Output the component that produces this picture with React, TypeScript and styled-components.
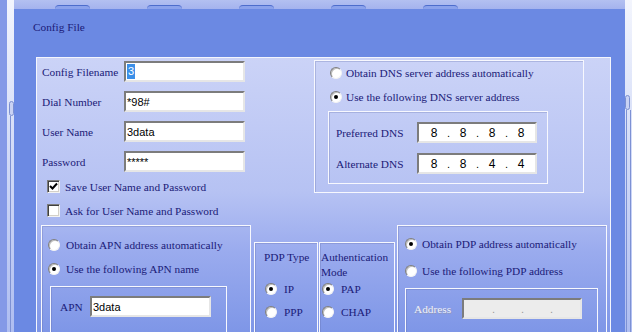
import React from "react";
import styled, { createGlobalStyle } from "styled-components";

const Global = createGlobalStyle`
  html, body { margin: 0; padding: 0; background: #dfe5fa; }
  body { font-family: "Liberation Serif", "Times New Roman", serif; }
  #root { width: 632px; height: 332px; overflow: hidden; }
`;

const NAVY = "#1b1b78";
const FS = "11.3px";

const Screen = styled.div`
  width: 632px;
  height: 332px;
  overflow: hidden;
  display: flex;
  background: linear-gradient(to bottom, #f3f5fd 0%, #d6def8 40%, #aebdf1 100%);
`;

const LeftStrip = styled.div`
  width: 7px;
  flex: none;
  background: #8499e7;
`;

const SideGap = styled.div<{ $bumpTop: number; $width: number }>`
  width: ${(p) => p.$width}px;
  flex: none;
  display: flex;
  flex-direction: column;
  box-sizing: border-box;
  padding-top: ${(p) => p.$bumpTop}px;
`;

const SideBump = styled.div<{ $offset: number }>`
  height: 15px;
  width: 5px;
  margin-left: ${(p) => p.$offset}px;
  box-sizing: border-box;
  border: 1px solid #7b8fd0;
  border-radius: 3px;
  background: #c9d2f4;
`;

const SideLines = styled.div<{ $offset: number }>`
  flex: 1;
  width: 3px;
  margin-left: ${(p) => p.$offset}px;
  border-left: 1px solid #7d91d4;
  border-right: 1px solid #7d91d4;
`;

const Center = styled.div`
  width: 611px;
  flex: none;
  display: flex;
  flex-direction: column;
`;

const TopBand = styled.div`
  height: 9px;
  flex: none;
  display: flex;
  align-items: flex-end;
  gap: 57px;
  padding-left: 41px;
  background: linear-gradient(to bottom, #b3c0f1, #a4b3ee);
`;

const Tab = styled.div`
  width: 35px;
  height: 3px;
  border-top: 1px solid #4d6dcc;
  border-radius: 9px 9px 0 0;
  background: #8ba2ec;
`;

const MainPanel = styled.div`
  flex: 1;
  background: #6b89e3;
  padding: 0 14px 0 19px;
  display: flex;
  flex-direction: column;
`;

const Title = styled.div`
  height: 48px;
  box-sizing: border-box;
  padding-top: 11px;
  font-size: ${FS};
  line-height: 14px;
  color: ${NAVY};
`;

const InnerPanel = styled.div`
  margin-left: 3px;
  height: 300px;
  box-sizing: border-box;
  border: 1px solid #f4f6fd;
  padding: 0 3px 0 4px;
  background: linear-gradient(to bottom, #cbd3f7 0%, #b6c2f3 45%, #9aabee 65%, #7690e5 100%);
  display: flex;
  flex-direction: column;
`;

const TopSection = styled.div`
  display: flex;
  align-items: flex-start;
`;

const LeftForm = styled.div`
  margin-left: 1px;
  margin-top: 3px;
  display: flex;
  flex-direction: column;
`;

const FieldRow = styled.div`
  display: flex;
  align-items: center;
  height: 21px;
  & + & { margin-top: 9px; }
`;

const Label = styled.span<{ $width?: number; $disabled?: boolean }>`
  width: ${(p) => (p.$width ? `${p.$width}px` : "auto")};
  flex: none;
  font-size: ${FS};
  line-height: 14px;
  white-space: nowrap;
  color: ${(p) => (p.$disabled ? "#eef0f8" : NAVY)};
  text-shadow: ${(p) => (p.$disabled ? "1px 1px 0 #8f98bf" : "none")};
`;

const TextBox = styled.div<{ $width: number; $disabled?: boolean }>`
  width: ${(p) => p.$width}px;
  height: 21px;
  flex: none;
  box-sizing: border-box;
  border: 2px solid;
  border-color: #7c7c7c #e6e6e6 #e6e6e6 #7c7c7c;
  background: ${(p) => (p.$disabled ? "#ececec" : "#ffffff")};
  padding: 0 2px 0 1px;
  display: flex;
  align-items: center;
  font-family: "Liberation Sans", Arial, sans-serif;
  font-size: 11px;
  color: #000;
  white-space: nowrap;
`;

const Selected = styled.span`
  background: #3b8fe8;
  color: #fff;
  padding: 0 1px;
  line-height: 15px;
`;

const IpSeg = styled.span<{ $muted?: boolean }>`
  width: 24px;
  text-align: center;
  font-size: 12px;
  color: ${(p) => (p.$muted ? "#9a9a9a" : "#000")};
`;

const IpDot = styled.span<{ $muted?: boolean }>`
  width: 5px;
  text-align: center;
  font-size: 11px;
  color: ${(p) => (p.$muted ? "#9a9a9a" : "#000")};
`;

const IpBox = styled(TextBox)`
  padding-left: 3px;
`;

const CheckRow = styled.div<{ $top: number }>`
  display: flex;
  align-items: center;
  gap: 5px;
  height: 13px;
  margin-top: ${(p) => p.$top}px;
  margin-left: 5px;
`;

const CheckBox = styled.span`
  width: 13px;
  height: 13px;
  flex: none;
  box-sizing: border-box;
  background: #fff;
  border: 1px solid;
  border-color: #7c7c7c #f2f2f2 #f2f2f2 #7c7c7c;
  box-shadow: inset 1px 1px 0 #3f3f3f, inset -1px -1px 0 #d4d0c8;
  display: flex;
  align-items: center;
  justify-content: center;
`;

const GroupBox = styled.div<{ $width: number; $height: number; $top?: number }>`
  width: ${(p) => p.$width}px;
  height: ${(p) => p.$height}px;
  margin-top: ${(p) => p.$top ?? 0}px;
  flex: none;
  box-sizing: border-box;
  border: 1px solid #f7f8fe;
  box-shadow: inset 1px 1px 0 rgba(95, 105, 165, 0.28);
  display: flex;
  flex-direction: column;
`;

const DnsBox = styled(GroupBox)`
  margin-left: auto;
  margin-right: 23px;
  padding: 5px 0 0 14px;
`;

const SubBox = styled(GroupBox)`
  margin-left: -1px;
`;

const DnsInner = styled(SubBox)`
  margin-top: 7px;
  padding: 10px 0 0 7px;
  gap: 10px;
`;

const RadioRow = styled.div<{ $gap?: number; $mt?: number }>`
  display: flex;
  align-items: center;
  gap: ${(p) => p.$gap ?? 5}px;
  height: 14px;
  margin-top: ${(p) => p.$mt ?? 0}px;
  margin-left: 1px;
`;

const Radio = styled.span<{ $checked?: boolean }>`
  width: 12px;
  height: 12px;
  flex: none;
  box-sizing: border-box;
  border-radius: 50%;
  background: #fff;
  border: 1px solid;
  border-color: #7d7d7d #f3f3f3 #f3f3f3 #7d7d7d;
  box-shadow: inset 1px 1px 0 #bdbdbd;
  display: flex;
  align-items: center;
  justify-content: center;
  &::after {
    content: "";
    width: 4px;
    height: 4px;
    border-radius: 50%;
    background: #000;
    display: ${(p) => (p.$checked ? "block" : "none")};
  }
`;

const BottomSection = styled.div`
  margin-top: 8px;
  display: flex;
  align-items: flex-start;
`;

const ApnBox = styled(GroupBox)`
  padding: 12px 0 0 5px;
`;

const ApnInner = styled(SubBox)`
  margin: 10px 0 0 3px;
  padding: 9px 0 0 9px;
  flex-direction: row;
  align-items: flex-start;
`;

const SmallBox = styled(GroupBox)<{ $gapLeft: number; $padLeft: number }>`
  margin-left: ${(p) => p.$gapLeft}px;
  padding: 7px 0 0 ${(p) => p.$padLeft}px;
`;

const BoxTitle = styled.div`
  font-size: ${FS};
  line-height: 15px;
  color: ${NAVY};
  height: 32px;
`;

const PdpBox = styled(GroupBox)`
  margin-left: 2px;
  padding: 11px 0 0 6px;
`;

const PdpInner = styled(SubBox)`
  margin: 10px 0 0 1px;
  padding: 9px 0 0 8px;
  flex-direction: row;
  align-items: flex-start;
`;

const InlineField = styled.div<{ $labelWidth: number }>`
  display: flex;
  align-items: center;
  height: 21px;
  & > span:first-child { width: ${(p) => p.$labelWidth}px; }
`;

function Check() {
  return (
    <svg width="9" height="9" viewBox="0 0 9 9">
      <path d="M1 4 L3.5 6.5 L8 1.5" fill="none" stroke="#000" strokeWidth="2" />
    </svg>
  );
}

function RadioOption({ checked, label, gap, mt }: { checked?: boolean; label: string; gap?: number; mt?: number }) {
  return (
    <RadioRow $gap={gap} $mt={mt}>
      <Radio $checked={checked} />
      <Label>{label}</Label>
    </RadioRow>
  );
}

function IpField({ parts, muted, width }: { parts: string[]; muted?: boolean; width: number }) {
  return (
    <IpBox $width={width} $disabled={muted}>
      {parts.map((p, i) => (
        <React.Fragment key={i}>
          {i > 0 && <IpDot $muted={muted}>.</IpDot>}
          <IpSeg $muted={muted}>{p}</IpSeg>
        </React.Fragment>
      ))}
    </IpBox>
  );
}

export default function App() {
  return (
    <>
      <Global />
      <Screen>
        <LeftStrip />
        <SideGap $bumpTop={101} $width={7}>
          <SideBump $offset={2} />
          <SideLines $offset={3} />
        </SideGap>
        <Center>
          <TopBand>
            <Tab />
            <Tab />
            <Tab />
            <Tab />
            <Tab />
          </TopBand>
          <MainPanel>
            <Title>Config File</Title>
            <InnerPanel>
              <TopSection>
                <LeftForm>
                  <FieldRow>
                    <Label $width={82}>Config Filename</Label>
                    <TextBox $width={121}>
                      <Selected>3</Selected>
                    </TextBox>
                  </FieldRow>
                  <FieldRow>
                    <Label $width={82}>Dial Number</Label>
                    <TextBox $width={121}>*98#</TextBox>
                  </FieldRow>
                  <FieldRow>
                    <Label $width={82}>User Name</Label>
                    <TextBox $width={121}>3data</TextBox>
                  </FieldRow>
                  <FieldRow>
                    <Label $width={82}>Password</Label>
                    <TextBox $width={121}>*****</TextBox>
                  </FieldRow>
                  <CheckRow $top={8}>
                    <CheckBox>
                      <Check />
                    </CheckBox>
                    <Label>Save User Name and Password</Label>
                  </CheckRow>
                  <CheckRow $top={11}>
                    <CheckBox />
                    <Label>Ask for User Name and Password</Label>
                  </CheckRow>
                </LeftForm>
                <DnsBox $width={270} $height={133} $top={2}>
                  <RadioOption label="Obtain DNS server address automatically" gap={4} />
                  <RadioOption checked label="Use the following DNS server address" gap={4} mt={10} />
                  <DnsInner $width={220} $height={73}>
                    <InlineField $labelWidth={81}>
                      <Label>Preferred DNS</Label>
                      <IpField width={120} parts={["8", "8", "8", "8"]} />
                    </InlineField>
                    <InlineField $labelWidth={81}>
                      <Label>Alternate DNS</Label>
                      <IpField width={120} parts={["8", "8", "4", "4"]} />
                    </InlineField>
                  </DnsInner>
                </DnsBox>
              </TopSection>
              <BottomSection>
                <ApnBox $width={210} $height={140}>
                  <RadioOption label="Obtain APN address automatically" gap={6} />
                  <RadioOption checked label="Use the following APN name" gap={6} mt={10} />
                  <ApnInner $width={177} $height={80}>
                    <InlineField $labelWidth={30}>
                      <Label>APN</Label>
                      <TextBox $width={121}>3data</TextBox>
                    </InlineField>
                  </ApnInner>
                </ApnBox>
                <SmallBox $width={64} $height={120} $top={17} $gapLeft={3} $padLeft={9}>
                  <BoxTitle>PDP Type</BoxTitle>
                  <RadioOption checked label="IP" gap={7} />
                  <RadioOption label="PPP" gap={7} mt={9} />
                </SmallBox>
                <SmallBox $width={76} $height={120} $top={17} $gapLeft={1} $padLeft={1}>
                  <BoxTitle>
                    Authentication
                    <br />
                    Mode
                  </BoxTitle>
                  <RadioOption checked label="PAP" gap={7} mt={0} />
                  <RadioOption label="CHAP" gap={7} mt={9} />
                </SmallBox>
                <PdpBox $width={210} $height={140}>
                  <RadioOption checked label="Obtain PDP address automatically" gap={5} />
                  <RadioOption label="Use the following PDP address" gap={5} mt={13} />
                  <PdpInner $width={193} $height={80}>
                    <InlineField $labelWidth={48}>
                      <Label $disabled>Address</Label>
                      <IpField width={120} muted parts={["", "", "", ""]} />
                    </InlineField>
                  </PdpInner>
                </PdpBox>
              </BottomSection>
            </InnerPanel>
          </MainPanel>
        </Center>
        <SideGap $bumpTop={95} $width={7}>
          <SideBump $offset={0} />
          <SideLines $offset={1} />
        </SideGap>
      </Screen>
    </>
  );
}
